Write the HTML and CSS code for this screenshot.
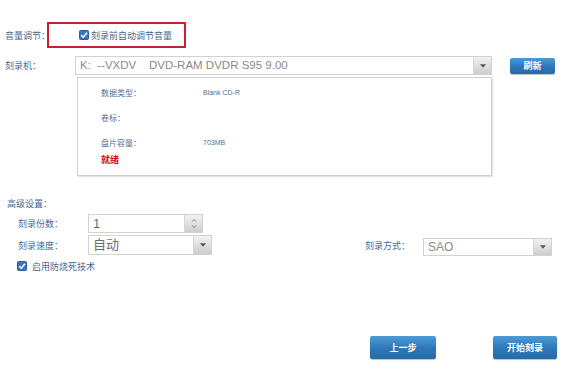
FILE: index.html
```html
<!DOCTYPE html>
<html lang="zh">
<head>
<meta charset="utf-8">
<link rel="stylesheet" href="styles.css">
</head>
<body>
<div class="page">
  <div class="row row-volume">
    <span class="label">音量调节：</span>
    <div class="redbox">
      <span class="check"><svg viewBox="0 0 10 10" width="10" height="10"><rect x="0.5" y="0.5" width="9" height="9" rx="1" fill="#3a78bb" stroke="#2a5f98"/><path d="M2.2 5.2 L4.2 7.2 L8 2.8" fill="none" stroke="#fff" stroke-width="1.5"/></svg></span>
      <span class="check-text">刻录前自动调节音量</span>
    </div>
  </div>

  <div class="row row-drive">
    <span class="label label-drive">刻录机：</span>
    <div class="select select-drive">
      <span class="select-text">K:  --VXDV    DVD-RAM DVDR S95 9.00</span>
      <span class="arrow"><svg viewBox="0 0 7 4" width="6" height="4"><path d="M0 0 H7 L3.5 4 Z" fill="#555"/></svg></span>
    </div>
    <button class="btn btn-small">刷新</button>
  </div>

  <div class="info">
    <div class="info-row"><span class="info-label">数据类型：</span><span class="info-value">Blank CD-R</span></div>
    <div class="info-row"><span class="info-label">卷标：</span><span class="info-value"></span></div>
    <div class="info-row"><span class="info-label">盘片容量：</span><span class="info-value">703MB</span></div>
    <div class="status">就绪</div>
  </div>

  <div class="adv-title label">高级设置：</div>

  <div class="row row-copies">
    <span class="label sub-label">刻录份数：</span>
    <div class="select select-copies">
      <span class="select-text">1</span>
      <span class="spin">
        <svg viewBox="0 0 7 4" width="6" height="3"><path d="M0.5 3.5 L3.5 0.8 L6.5 3.5" fill="none" stroke="#666" stroke-width="1"/></svg>
        <svg viewBox="0 0 7 4" width="6" height="3"><path d="M0.5 0.5 L3.5 3.2 L6.5 0.5" fill="none" stroke="#666" stroke-width="1"/></svg>
      </span>
    </div>
  </div>

  <div class="row row-speed">
    <span class="label sub-label">刻录速度：</span>
    <div class="select select-speed">
      <span class="select-text">自动</span>
      <span class="arrow"><svg viewBox="0 0 7 4" width="6" height="4"><path d="M0 0 H7 L3.5 4 Z" fill="#555"/></svg></span>
    </div>
    <span class="label method-label">刻录方式：</span>
    <div class="select select-method">
      <span class="select-text">SAO</span>
      <span class="arrow"><svg viewBox="0 0 7 4" width="6" height="4"><path d="M0 0 H7 L3.5 4 Z" fill="#555"/></svg></span>
    </div>
  </div>

  <div class="row row-burnproof">
    <span class="check"><svg viewBox="0 0 10 10" width="10" height="10"><rect x="0.5" y="0.5" width="9" height="9" rx="1" fill="#3a78bb" stroke="#2a5f98"/><path d="M2.2 5.2 L4.2 7.2 L8 2.8" fill="none" stroke="#fff" stroke-width="1.5"/></svg></span>
    <span class="check-text">启用防烧死技术</span>
  </div>

  <div class="actions">
    <button class="btn btn-big btn-prev">上一步</button>
    <button class="btn btn-big btn-start">开始刻录</button>
  </div>
</div>
</body>
</html>
```

FILE: styles.css
```css
* { box-sizing: border-box; }
html, body {
  margin: 0;
  padding: 0;
  background: #fff;
}
body {
  width: 570px;
  height: 378px;
  overflow: hidden;
  font-family: "Noto Sans CJK SC", "Liberation Sans", sans-serif;
}
.page {
  padding-top: 22px;
}
.row {
  display: flex;
  align-items: center;
}
.label {
  font-size: 9px;
  color: #3f6a96;
  line-height: 1;
  white-space: nowrap;
}
.row-volume {
  height: 26px;
  padding-left: 5px;
}
.row-volume .label {
  width: 42px;
}
.redbox {
  width: 139px;
  height: 26px;
  border: 2px solid #c4232d;
  display: flex;
  align-items: center;
  padding-left: 30px;
}
.check {
  display: inline-flex;
  width: 10px;
  height: 10px;
  margin-right: 2px;
}
.check-text {
  font-size: 9px;
  color: #3f6890;
  line-height: 1;
  white-space: nowrap;
}

.row-drive {
  margin-top: 8px;
  height: 19px;
  padding-left: 5px;
}
.label-drive {
  width: 70px;
}
.select {
  display: flex;
  align-items: stretch;
  border: 1px solid #d2d2d2;
  background: #fff;
  height: 19px;
}
.select-text {
  flex: 1;
  font-family: "Liberation Sans", "Noto Sans CJK SC", sans-serif;
  font-size: 12px;
  color: #8a8a8a;
  line-height: 17px;
  padding-left: 4px;
  white-space: pre;
  overflow: hidden;
}
.select-drive .select-text {
  font-size: 11.5px;
}
.arrow, .spin {
  width: 18px;
  border-left: 1px solid #d6d6d6;
  background: linear-gradient(#f2f2f2, #cdcdcd);
  display: flex;
  align-items: center;
  justify-content: center;
}
.spin {
  flex-direction: column;
  gap: 3px;
}
.select-drive {
  width: 417px;
}
.btn {
  border: none;
  color: #fff;
  font-family: "Noto Sans CJK SC", sans-serif;
  font-weight: bold;
  padding: 0;
  background: linear-gradient(#4e9ad6, #2d77b8 55%, #2a6aa6);
  border-radius: 2px;
  box-shadow: 0 1px 1px rgba(0,0,0,0.25);
}
.btn-small {
  margin-left: 18px;
  width: 45px;
  height: 16px;
  font-size: 9px;
  line-height: 16px;
}

.info {
  margin-top: 2px;
  margin-left: 77px;
  width: 415px;
  height: 99px;
  border: 1px solid #cfcfcf;
  box-shadow: 1px 1px 1px #e4e4e4;
  padding-top: 2px;
  padding-left: 23px;
}
.info-row {
  display: flex;
  align-items: center;
  height: 25px;
}
.info-label {
  width: 102px;
  font-size: 8px;
  color: #4f7399;
  line-height: 1;
  white-space: nowrap;
}
.info-value {
  font-family: "Liberation Sans", sans-serif;
  font-size: 7px;
  color: #607080;
  line-height: 1;
}
.status {
  margin-top: 0;
  font-size: 9px;
  font-weight: bold;
  color: #d0121b;
  line-height: 1;
}

.adv-title {
  margin-top: 23px;
  padding-left: 7px;
}
.row-copies {
  margin-top: 6px;
  height: 19px;
  padding-left: 18px;
}
.sub-label {
  width: 70px;
}
.select-copies {
  width: 115px;
}
.select-copies .select-text,
.select-speed .select-text {
  font-size: 13px;
  color: #6e6e6e;
}
.row-speed {
  margin-top: 2px;
  height: 20px;
  padding-left: 18px;
  padding-right: 18px;
}
.select-speed {
  width: 124px;
  height: 20px;
}
.method-label {
  margin-left: auto;
  width: 58px;
}
.select-method {
  width: 129px;
  height: 18px;
  margin-top: 3px;
}
.select-method .select-text {
  line-height: 16px;
}
.row-burnproof {
  margin-top: 6px;
  padding-left: 17px;
}
.row-burnproof .check {
  margin-right: 5px;
}

.actions {
  display: flex;
  justify-content: flex-end;
  margin-top: 65px;
  padding-right: 13px;
  gap: 57px;
}
.btn-big {
  height: 23px;
  font-size: 9px;
  line-height: 23px;
}
.btn-prev { width: 66px; }
.btn-start { width: 64px; }
```
